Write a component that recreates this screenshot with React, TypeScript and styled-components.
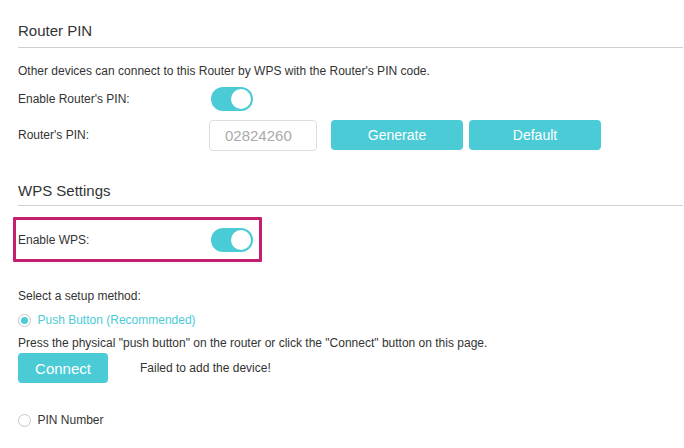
import React from "react";
import styled, { createGlobalStyle } from "styled-components";

const Global = createGlobalStyle`
  html, body { margin: 0; padding: 0; background: #fff; }
  body { font-family: "Liberation Sans", Arial, sans-serif; color: #333; }
  * { box-sizing: border-box; }
`;

const TEAL = "#4acbd6";

const Page = styled.div`
  padding: 0 1px 0 18px;
  width: 684px;
  height: 448px;
  overflow: hidden;
`;

const SectionHeader = styled.div<{ $top: number; $bottom: number }>`
  padding-top: ${(p) => p.$top}px;
  padding-bottom: ${(p) => p.$bottom}px;
  border-bottom: 1px solid #cfcfcf;
  font-size: 15px;
  line-height: 20px;
  color: #333;
`;

const Row = styled.div<{ $h: number; $mt: number }>`
  display: flex;
  align-items: center;
  height: ${(p) => p.$h}px;
  margin-top: ${(p) => p.$mt}px;
  font-size: 12px;
`;

const Label = styled.div`
  width: 193px;
  flex: none;
`;

const Highlight = styled.div`
  display: flex;
  align-items: center;
  width: fit-content;
  height: 45px;
  margin-top: 11px;
  margin-left: -5px;
  border: 3px solid #c41f6e;
  border-radius: 1px;
  padding: 0 6px 0 2px;
  font-size: 12px;
`;

const Track = styled.div`
  position: relative;
  width: 42px;
  height: 24px;
  border-radius: 12px;
  background: ${TEAL};
  flex: none;
`;

const Knob = styled.div`
  position: absolute;
  top: 2px;
  right: 2px;
  width: 20px;
  height: 20px;
  border-radius: 50%;
  background: #fff;
`;

const Toggle = () => (
  <Track>
    <Knob />
  </Track>
);

const PinInput = styled.div`
  width: 108px;
  height: 31px;
  margin-left: -2px;
  border: 1px solid #dedede;
  border-radius: 4px;
  display: flex;
  align-items: center;
  padding-left: 15px;
  font-size: 15px;
  color: #aaa;
`;

const Button = styled.button<{ $w: number; $h: number; $fs: number; $ml: number }>`
  width: ${(p) => p.$w}px;
  height: ${(p) => p.$h}px;
  margin-left: ${(p) => p.$ml}px;
  border: none;
  border-radius: 4px;
  background: ${TEAL};
  color: #fff;
  font-family: "Liberation Sans", Arial, sans-serif;
  font-size: ${(p) => p.$fs}px;
  padding: 0;
  flex: none;
`;

const RadioCircle = styled.span<{ $checked?: boolean }>`
  width: 13px;
  height: 13px;
  border-radius: 50%;
  border: 1px solid #c6c6c6;
  display: inline-flex;
  align-items: center;
  justify-content: center;
  margin-right: 7px;
  margin-left: -0.5px;
  flex: none;
  &::after {
    content: "";
    display: ${(p) => (p.$checked ? "block" : "none")};
    width: 7px;
    height: 7px;
    border-radius: 50%;
    background: ${TEAL};
  }
`;

const RadioText = styled.span<{ $active?: boolean }>`
  color: ${(p) => (p.$active ? TEAL : "#333")};
`;

const Message = styled.span`
  margin-left: 32px;
`;

export default function App() {
  return (
    <>
      <Global />
      <Page>
        <SectionHeader $top={21} $bottom={6}>Router PIN</SectionHeader>
        <Row $h={18} $mt={14}>
          Other devices can connect to this Router by WPS with the Router's PIN code.
        </Row>
        <Row $h={28} $mt={5}>
          <Label>Enable Router's PIN:</Label>
          <Toggle />
        </Row>
        <Row $h={32} $mt={6}>
          <Label>Router's PIN:</Label>
          <PinInput>02824260</PinInput>
          <Button $w={132} $h={30} $fs={14} $ml={14}>Generate</Button>
          <Button $w={132} $h={30} $fs={14} $ml={6}>Default</Button>
        </Row>
        <SectionHeader $top={30} $bottom={4}>WPS Settings</SectionHeader>
        <Highlight>
          <Label>Enable WPS:</Label>
          <Toggle />
        </Highlight>
        <Row $h={18} $mt={25}>Select a setup method:</Row>
        <Row $h={18} $mt={6}>
          <RadioCircle $checked />
          <RadioText $active>Push Button (Recommended)</RadioText>
        </Row>
        <Row $h={18} $mt={5}>
          Press the physical "push button" on the router or click the "Connect" button on this page.
        </Row>
        <Row $h={30} $mt={1}>
          <Button $w={90} $h={30} $fs={15} $ml={0}>Connect</Button>
          <Message>Failed to add the device!</Message>
        </Row>
        <Row $h={18} $mt={28}>
          <RadioCircle />
          <RadioText>PIN Number</RadioText>
        </Row>
      </Page>
    </>
  );
}
